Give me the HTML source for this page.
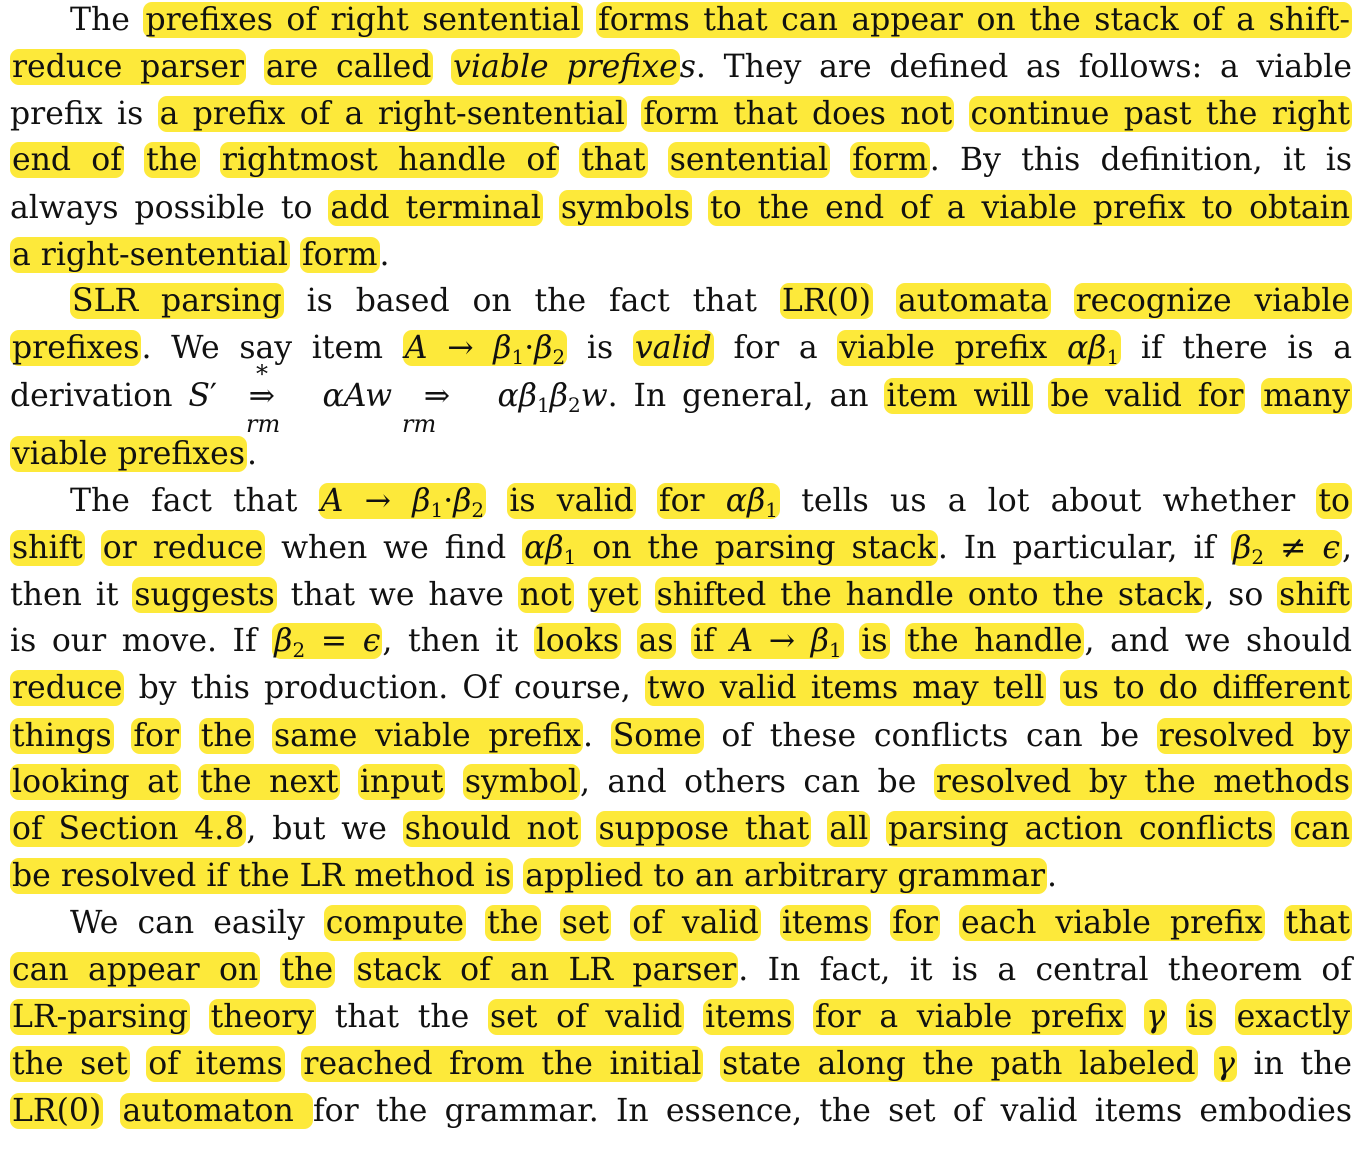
<!DOCTYPE html>
<html><head><meta charset="utf-8"><style>
body{margin:0;background:#fff;width:1362px;height:1156px;overflow:hidden;position:relative;font-family:"DejaVu Serif","Liberation Serif",serif;color:#111}
.l{position:absolute;left:10px;width:1342px;height:40px;line-height:40px;font-size:31.5px;text-align:justify;text-align-last:justify;white-space:nowrap;word-spacing:0}
.l.n{text-align-last:left}
.l.i{left:70px;width:1282px}
.h{background:#fde93a;border-radius:9px;padding:0 2px;box-decoration-break:clone}
i{font-style:italic}
sub{font-size:20px;vertical-align:-6px;line-height:0}
.rm{position:absolute;font-size:24px;font-style:italic;top:410px;font-family:"DejaVu Serif",serif}
.st{position:absolute;font-size:24px;top:360px;left:256px}
</style></head><body>
<div class="l i" style="top:0">The <span class=h>prefixes of right sentential</span> <span class=h>forms that can appear on the stack of a shift-</span></div>
<div class="l" style="top:47px"><span class=h>reduce parser</span> <span class=h>are called</span> <span class=h><i>viable prefixe</i></span><i>s</i>. They are defined as follows: a viable</div>
<div class="l" style="top:94px">prefix is <span class=h>a prefix of a right-sentential</span> <span class=h>form that does not</span> <span class=h>continue past the right</span></div>
<div class="l" style="top:140px"><span class=h>end of</span> <span class=h>the</span> <span class=h>rightmost handle of</span> <span class=h>that</span> <span class=h>sentential</span> <span class=h>form</span>. By this definition, it is</div>
<div class="l" style="top:188px">always possible to <span class=h>add terminal</span> <span class=h>symbols</span> <span class=h>to the end of a viable prefix to obtain</span></div>
<div class="l n" style="top:235px"><span class=h>a right-sentential</span> <span class=h>form</span>.</div>
<div class="l i" style="top:281px"><span class=h>SLR parsing</span> is based on the fact that <span class=h>LR(0)</span> <span class=h>automata</span> <span class=h>recognize viable</span></div>
<div class="l" style="top:328px"><span class=h>prefixes</span>. We say item <span class=h><i>A</i> → <i>β</i><sub>1</sub>·<i>β</i><sub>2</sub></span> is <span class=h><i>valid</i></span> for a <span class=h>viable prefix <i>αβ</i><sub>1</sub></span> if there is a</div>
<div class="l" style="top:376px">derivation <i>S</i>′ &nbsp;⇒&nbsp; &nbsp;<i>αAw</i> &nbsp;⇒&nbsp; &nbsp;<i>αβ</i><sub>1</sub><i>β</i><sub>2</sub><i>w</i>. In general, an <span class=h>item will</span> <span class=h>be valid for</span> <span class=h>many</span></div>
<div class="st">*</div>
<div class="rm" style="left:246px">rm</div>
<div class="rm" style="left:402px">rm</div>
<div class="l n" style="top:434px"><span class=h>viable prefixes</span>.</div>
<div class="l i" style="top:481px">The fact that <span class=h><i>A</i> → <i>β</i><sub>1</sub>·<i>β</i><sub>2</sub></span> <span class=h>is valid</span> <span class=h>for <i>αβ</i><sub>1</sub></span> tells us a lot about whether <span class=h>to</span></div>
<div class="l" style="top:528px"><span class=h>shift</span> <span class=h>or reduce</span> when we find <span class=h><i>αβ</i><sub>1</sub> on the parsing stack</span>. In particular, if <span class=h><i>β</i><sub>2</sub> ≠ <i>ϵ</i></span>,</div>
<div class="l" style="top:575px">then it <span class=h>suggests</span> that we have <span class=h>not</span> <span class=h>yet</span> <span class=h>shifted the handle onto the stack</span>, so <span class=h>shift</span></div>
<div class="l" style="top:621px">is our move. If <span class=h><i>β</i><sub>2</sub> = <i>ϵ</i></span>, then it <span class=h>looks</span> <span class=h>as</span> <span class=h>if <i>A</i> → <i>β</i><sub>1</sub></span> <span class=h>is</span> <span class=h>the handle</span>, and we should</div>
<div class="l" style="top:668px"><span class=h>reduce</span> by this production. Of course, <span class=h>two valid items may tell</span> <span class=h>us to do different</span></div>
<div class="l" style="top:716px"><span class=h>things</span> <span class=h>for</span> <span class=h>the</span> <span class=h>same viable prefix</span>. <span class=h>Some</span> of these conflicts can be <span class=h>resolved by</span></div>
<div class="l" style="top:762px"><span class=h>looking at</span> <span class=h>the next</span> <span class=h>input</span> <span class=h>symbol</span>, and others can be <span class=h>resolved by the methods</span></div>
<div class="l" style="top:809px"><span class=h>of Section 4.8</span>, but we <span class=h>should not</span> <span class=h>suppose that</span> <span class=h>all</span> <span class=h>parsing action conflicts</span> <span class=h>can</span></div>
<div class="l n" style="top:856px"><span class=h>be resolved if the LR method is</span> <span class=h>applied to an arbitrary grammar</span>.</div>
<div class="l i" style="top:903px">We can easily <span class=h>compute</span> <span class=h>the</span> <span class=h>set</span> <span class=h>of valid</span> <span class=h>items</span> <span class=h>for</span> <span class=h>each viable prefix</span> <span class=h>that</span></div>
<div class="l" style="top:950px"><span class=h>can appear on</span> <span class=h>the</span> <span class=h>stack of an LR parser</span>. In fact, it is a central theorem of</div>
<div class="l" style="top:997px"><span class=h>LR-parsing</span> <span class=h>theory</span> that the <span class=h>set of valid</span> <span class=h>items</span> <span class=h>for a viable prefix</span> <span class=h><i>γ</i></span> <span class=h>is</span> <span class=h>exactly</span></div>
<div class="l" style="top:1044px"><span class=h>the set</span> <span class=h>of items</span> <span class=h>reached from the initial</span> <span class=h>state along the path labeled</span> <span class=h><i>γ</i></span> in the</div>
<div class="l" style="top:1091px"><span class=h>LR(0)</span> <span class=h>automaton </span>for the grammar. In essence, the set of valid items embodies</div>
</body></html>
